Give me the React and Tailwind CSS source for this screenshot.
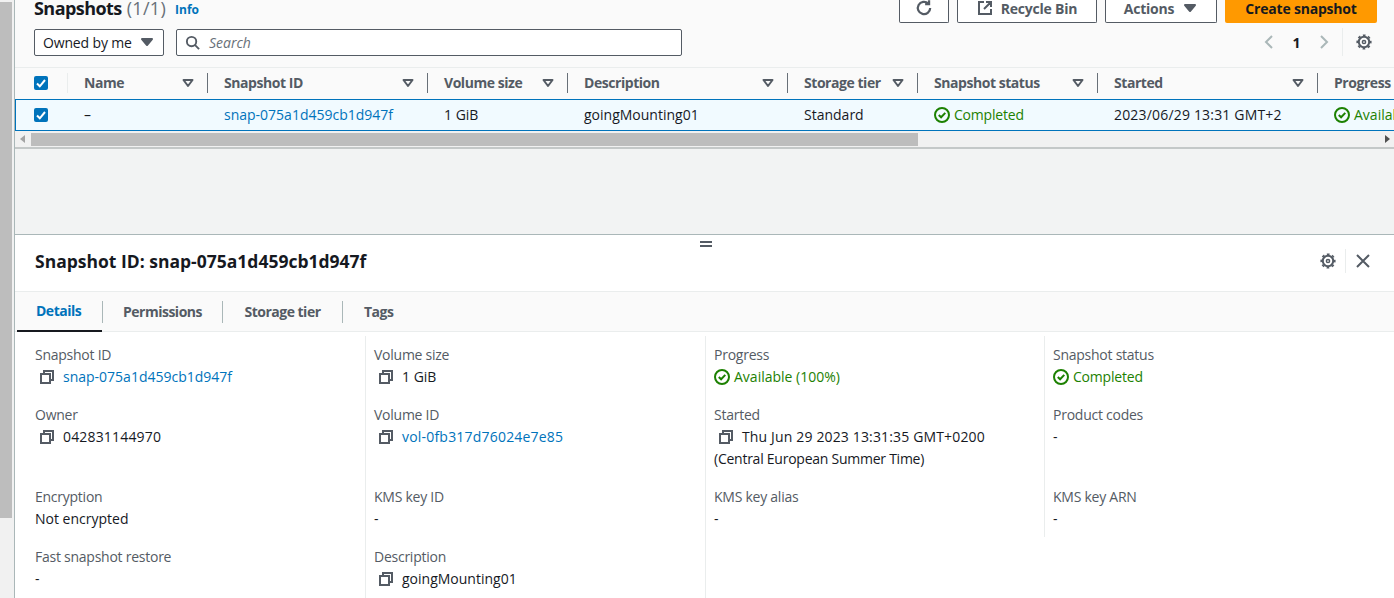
import React from 'react';

const Caret = ({ className = '' }) => (
  <svg width="16" height="16" viewBox="0 0 16 16" className={className}>
    <path d="M3 5h10l-5 6z" fill="currentColor" stroke="currentColor" strokeWidth="2" strokeLinejoin="round" />
  </svg>
);

const SortCaret = () => (
  <svg width="16" height="16" viewBox="0 0 16 16" className="text-[#545b64] shrink-0">
    <path d="M3.500 5h9L8 11z" fill="none" stroke="currentColor" strokeWidth="2" strokeLinejoin="round" />
  </svg>
);

const Check = () => (
  <span className="w-[14px] h-[14px] rounded-[2px] bg-[#0073bb] flex items-center justify-center shrink-0">
    <svg width="14" height="14" viewBox="0 0 14 14">
      <path d="M3 7.500l2.800 2.800L11 4" fill="none" stroke="white" strokeWidth="2" />
    </svg>
  </span>
);

const Ok = () => (
  <svg width="16" height="16" viewBox="0 0 16 16" className="shrink-0">
    <circle cx="8" cy="8" r="7" fill="none" stroke="#1d8102" strokeWidth="2" />
    <path d="M4.800 8l2.300 2.300 4.200-4.400" fill="none" stroke="#1d8102" strokeWidth="2" />
  </svg>
);

const Copy = () => (
  <svg width="16" height="16" viewBox="0 0 16 16" className="shrink-0">
    <path d="M5 5V2h9v9h-3" fill="none" stroke="#545b64" strokeWidth="2" />
    <rect x="2" y="5" width="9" height="9" fill="none" stroke="#545b64" strokeWidth="2" />
  </svg>
);

const Gear = () => (
  <svg width="16" height="16" viewBox="0 0 16 16" className="shrink-0">
    <circle cx="8" cy="8" r="5.200" fill="none" stroke="#545b64" strokeWidth="2" />
    <circle cx="8" cy="8" r="6.800" fill="none" stroke="#545b64" strokeWidth="1.600" strokeDasharray="2.700 2.640" strokeDashoffset="1.350" />
    <circle cx="8" cy="8" r="1.600" fill="none" stroke="#545b64" strokeWidth="1.500" />
  </svg>
);

const columns = [
  { name: 'Name', w: 'w-[140px]', val: '–' },
  { name: 'Snapshot ID', w: 'w-[220px]', val: 'snap-075a1d459cb1d947f', link: true },
  { name: 'Volume size', w: 'w-[140px]', val: '1 GiB' },
  { name: 'Description', w: 'w-[220px]', val: 'goingMounting01' },
  { name: 'Storage tier', w: 'w-[130px]', val: 'Standard' },
  { name: 'Snapshot status', w: 'w-[180px]', val: 'Completed', ok: true, tr: 'tracking-[-0.2px]' },
  { name: 'Started', w: 'w-[220px]', val: '2023/06/29 13:31 GMT+2', tr: 'tracking-[0.18px]' },
  { name: 'Progress', w: 'w-[120px]', val: 'Available (100%)', ok: true, last: true },
];

const detailCols = [
  {
    w: 'w-[350px] pl-[20px]',
    fields: [
      { label: 'Snapshot ID', value: 'snap-075a1d459cb1d947f', copy: true, link: true },
      { label: 'Owner', value: '042831144970', copy: true, tr: 'tracking-[0.17px]' },
      { label: 'Encryption', value: 'Not encrypted' },
      { label: 'Fast snapshot restore', value: '-' },
    ],
  },
  {
    w: 'w-[340px] pl-[8px] border-l border-[#eaeded]',
    fields: [
      { label: 'Volume size', value: '1 GiB', copy: true },
      { label: 'Volume ID', value: 'vol-0fb317d76024e7e85', copy: true, link: true, tr: 'tracking-[0.2px]' },
      { label: 'KMS key ID', value: '-' },
      { label: 'Description', value: 'goingMounting01', copy: true },
    ],
  },
  {
    w: 'w-[339px] pl-[8px] border-l border-[#eaeded]',
    fields: [
      { label: 'Progress', value: 'Available (100%)', ok: true },
      { label: 'Started', value: 'Thu Jun 29 2023 13:31:35 GMT+0200', copy: true, extra: '(Central European Summer Time)', tr: 'tracking-[0.15px]' },
      { label: 'KMS key alias', value: '-' },
    ],
  },
  {
    w: 'w-[340px] h-[201px] pl-[8px] border-l border-[#eaeded]',
    fields: [
      { label: 'Snapshot status', value: 'Completed', ok: true, tr: 'tracking-[-0.2px]' },
      { label: 'Product codes', value: '-' },
      { label: 'KMS key ARN', value: '-' },
    ],
  },
];

const Field = ({ f, tall }) => (
  <div className={tall ? 'h-[82px]' : 'h-[60px]'}>
    <div className="text-[#545b64] leading-[22px] tracking-[-0.25px]">{f.label}</div>
    <div className={`flex items-center leading-[22px] ${f.copy ? 'pl-[4px] gap-[8px]' : 'gap-[4px]'} ${f.ok ? 'text-[#1d8102]' : f.link ? 'text-[#0073bb]' : 'text-[#16191f]'}`}>
      {f.copy && <Copy />}
      {f.ok && <Ok />}
      <span className={`whitespace-nowrap ${f.tr || ''}`}>{f.value}</span>
    </div>
    {f.extra && <div className="leading-[22px] text-[#16191f] whitespace-nowrap tracking-[-0.25px]">{f.extra}</div>}
  </div>
);

export default function App() {
  return (
    <div className="w-[1394px] h-[598px] overflow-hidden flex bg-white text-[14px] text-[#16191f] font-['Open_Sans','Noto_Sans',sans-serif]">
      <div className="w-[14px] shrink-0 bg-[#f1f1f1] pt-[2px] border-r border-[#aab7b8] box-content">
        <div className="h-[516px] w-[12px] bg-[#bdbdbd]" />
      </div>
      <div className="flex-1 min-w-0 flex flex-col">
        <div className="h-[68px] bg-[#fafafa] border-b border-[#eaeded] pl-[19px] pr-[17px] flex flex-col">
          <div className="flex justify-between h-[23px]">
            <div className="flex items-start">
              <span className="text-[18px] font-bold leading-[16px] tracking-[-0.55px]">Snapshots</span>
              <span className="text-[18px] leading-[16px] text-[#687078] ml-[5px] tracking-[0.3px]">(1/1)</span>
              <span className="text-[12px] font-bold text-[#0073bb] ml-[9px] leading-[16px] mt-[2px]">Info</span>
            </div>
            <div className="flex gap-[8px] font-bold text-[#545b64] tracking-[-0.2px]">
              <button className="w-[50px] h-[23px] border border-[#545b64] rounded-b-[2px] border-t-0 bg-white flex items-center justify-center pb-[6px]">
                <svg width="18" height="18" viewBox="0 0 16 16">
                  <path d="M13.500 8a5.500 5.500 0 1 1-1.700-4M12.500 1v3.500H9" fill="none" stroke="#545b64" strokeWidth="2" />
                </svg>
              </button>
              <button className="w-[140px] h-[23px] border border-[#545b64] rounded-b-[2px] border-t-0 bg-white flex items-center justify-center gap-[8px] pb-[6px]">
                <svg width="16" height="16" viewBox="0 0 16 16">
                  <path d="M7 2H2v12h12V9M9 2h5v5M14 2L7 9" fill="none" stroke="#545b64" strokeWidth="2" />
                </svg>
                Recycle Bin
              </button>
              <button className="w-[112px] h-[23px] border border-[#545b64] rounded-b-[2px] border-t-0 bg-white flex items-center justify-center gap-[8px] pb-[6px]">
                Actions
                <Caret />
              </button>
              <button className="w-[152px] h-[23px] rounded-b-[2px] bg-[#ff9900] text-[#16191f] flex items-center justify-center pb-[6px]">Create snapshot</button>
            </div>
          </div>
          <div className="flex items-center mt-[5px] h-[28px]">
            <button className="w-[130px] h-[27px] border border-[#545b64] rounded-[2px] bg-white flex items-center justify-between pl-[8px] pr-[8px] tracking-[-0.15px]">
              Owned by me
              <Caret className="text-[#545b64]" />
            </button>
            <div className="ml-[12px] w-[506px] h-[27px] border border-[#545b64] rounded-[2px] bg-white flex items-center pl-[8px] gap-[9px]">
              <svg width="15" height="15" viewBox="0 0 16 16">
                <circle cx="7" cy="7" r="5" fill="none" stroke="#545b64" strokeWidth="2" />
                <path d="M10.500 10.500L15 15" stroke="#545b64" strokeWidth="2" />
              </svg>
              <span className="italic text-[#687078]">Search</span>
            </div>
            <div className="ml-auto mr-[5px] flex items-center">
              <svg width="16" height="16" viewBox="0 0 16 16">
                <path d="M11 2L5 8l6 6" fill="none" stroke="#aab7b8" strokeWidth="2" />
              </svg>
              <span className="font-bold w-[39px] text-center">1</span>
              <svg width="16" height="16" viewBox="0 0 16 16">
                <path d="M5 2l6 6-6 6" fill="none" stroke="#aab7b8" strokeWidth="2" />
              </svg>
              <div className="w-px h-[28px] bg-[#eaeded] ml-[10px] mr-[13px]" />
              <Gear />
            </div>
          </div>
        </div>

        <div className="h-[31px] bg-[#fafafa] flex items-center overflow-hidden pb-[1px]">
          <div className="w-[53px] shrink-0 pl-[19px] flex items-center h-[20px] border-r border-[#eaeded]">
            <Check />
          </div>
          {columns.map((c) => (
            <div key={c.name} className={`${c.w} shrink-0 h-[20px] pl-[16px] pr-[11px] flex items-center justify-between font-bold text-[#545b64] tracking-[-0.45px] whitespace-nowrap ${c.last ? '' : 'border-r border-[#687078]'}`}>
              <span className="pb-[1px]">{c.name}</span>
              {!c.last && <SortCaret />}
            </div>
          ))}
        </div>
        <div className="h-[32px] bg-[#f1faff] border border-r-0 border-[#0073bb] flex items-center overflow-hidden">
          <div className="w-[52px] shrink-0 pl-[18px]">
            <Check />
          </div>
          {columns.map((c) => (
            <div key={c.name} className={`${c.w} shrink-0 pl-[16px] flex items-center gap-[4px] whitespace-nowrap ${c.ok ? 'text-[#1d8102]' : c.link ? 'text-[#0073bb]' : ''}`}>
              {c.ok && <Ok />}
              <span className={`pb-[1px] ${c.tr || ''}`}>{c.val}</span>
            </div>
          ))}
        </div>

        <div className="h-[18px] bg-[#f1f1f1] flex items-center border-b-2 border-[#c4c8c8]">
          <div className="w-[16px] flex justify-center text-[#a3a3a3]">
            <svg width="6" height="8" viewBox="0 0 6 8"><path d="M5 0v8L0 4z" fill="currentColor" /></svg>
          </div>
          <div className="w-[887px] h-[13px] bg-[#bdbdbd]" />
          <div className="ml-auto mr-[2px] w-[8px]">
            <svg width="6" height="8" viewBox="0 0 6 8"><path d="M1 0v8l5-4z" fill="#505050" /></svg>
          </div>
        </div>

        <div className="h-[85px] bg-[#f2f3f3]" />

        <div className="flex-1 min-h-0 bg-white border-t border-[#aab7b8] flex flex-col">
          <div className="h-[57px] flex items-center justify-between pl-[20px] pr-[23px] pb-[4px] border-b border-[#eaeded] relative">
            <span className="absolute left-[685px] top-[6px] flex flex-col gap-[2px]">
              <span className="block w-[12px] h-[2px] bg-[#545b64]" />
              <span className="block w-[12px] h-[2px] bg-[#545b64]" />
            </span>
            <h2 className="text-[17.5px] font-bold">Snapshot ID: snap-075a1d459cb1d947f</h2>
            <div className="flex items-center">
              <Gear />
              <div className="w-px h-[24px] bg-[#eaeded] ml-[9px] mr-[9px]" />
              <svg width="16" height="16" viewBox="0 0 16 16">
                <path d="M2 2l12 12M14 2L2 14" fill="none" stroke="#545b64" strokeWidth="2" />
              </svg>
            </div>
          </div>
          <div className="h-[40px] bg-[#fafafa] border-b border-[#eaeded] flex items-center pl-[2px] font-bold text-[#545b64] tracking-[-0.5px]">
            <div className="w-[85px] h-[40px] flex items-center pl-[19px] text-[#0073bb] border-b-2 border-[#16191f]">Details</div>
            <div className="w-px h-[22px] bg-[#aab7b8]" />
            <div className="w-[119px] text-center">Permissions</div>
            <div className="w-px h-[22px] bg-[#aab7b8]" />
            <div className="w-[119px] text-center">Storage tier</div>
            <div className="w-px h-[22px] bg-[#aab7b8]" />
            <div className="pl-[21px]">Tags</div>
          </div>
          <div className="flex pt-[4px] flex-1 min-h-0 items-start">
            {detailCols.map((col, i) => (
              <div key={i} className={`${col.w} ${i === 3 ? '' : 'h-full'} shrink-0 pt-[8px]`}>
                {col.fields.map((f, j) => (
                  <Field key={f.label} f={f} tall={j === 1} />
                ))}
              </div>
            ))}
          </div>
        </div>
      </div>
    </div>
  );
}
